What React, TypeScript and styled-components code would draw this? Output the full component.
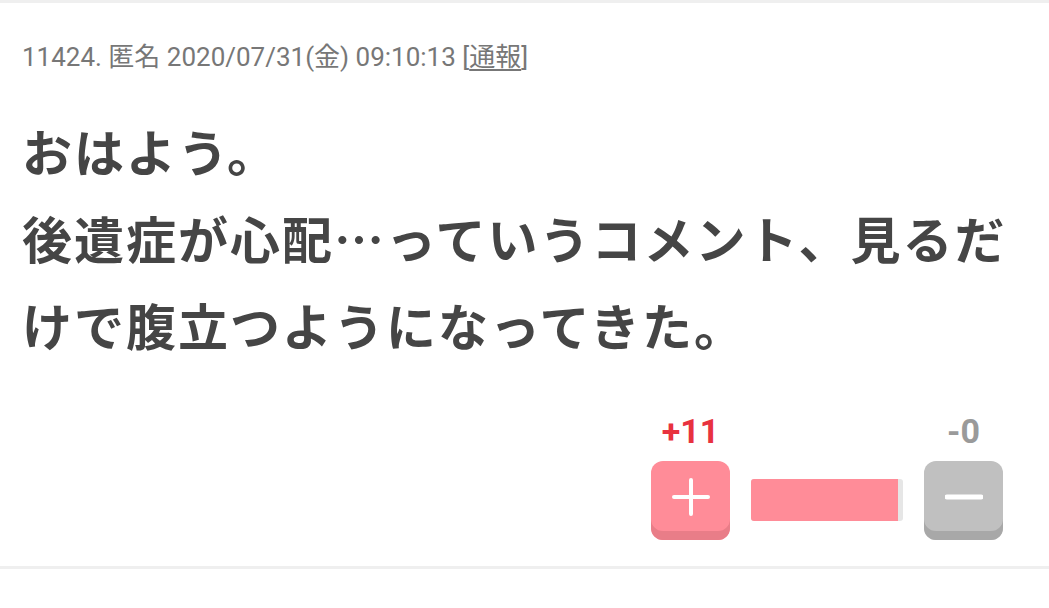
import React from "react";
import styled, { createGlobalStyle } from "styled-components";

const GlobalStyle = createGlobalStyle`
    html, body {
        margin: 0;
        padding: 0;
        background: #ffffff;
    }
`;

const Comment = styled.article`
    border-top: 3px solid #efefef;
    border-bottom: 3px solid #efefef;
    padding: 0 46px 26px 22px;
`;

const Meta = styled.div`
    margin-top: 39px;
    font-family: Roboto, "Noto Sans CJK JP", sans-serif;
    font-size: 26px;
    line-height: 30px;
    height: 30px;
    color: #777777;
    white-space: nowrap;
`;

const ReportLink = styled.a`
    color: #777777;
    text-decoration: underline;
    text-underline-offset: 3px;
`;

const Body = styled.p`
    margin: 35px -24px 0 0;
    font-family: "Noto Sans CJK JP", sans-serif;
    font-weight: 700;
    font-size: 50px;
    line-height: 87px;
    letter-spacing: 2px;
    color: #454545;
`;

const VoteRow = styled.div`
    display: flex;
    justify-content: flex-end;
    align-items: flex-end;
    margin-top: 43px;
`;

const VoteColumn = styled.div`
    display: flex;
    flex-direction: column;
    align-items: center;
    width: 79px;
`;

const VoteCount = styled.div<{ $tone: "plus" | "minus" }>`
    font-family: Roboto, sans-serif;
    font-weight: 700;
    font-size: 34px;
    line-height: 40px;
    height: 40px;
    margin-bottom: 10px;
    color: ${(p) => (p.$tone === "plus" ? "#e8323f" : "#9a9a9a")};
`;

const VoteButton = styled.button<{ $tone: "plus" | "minus" }>`
    display: flex;
    align-items: center;
    justify-content: center;
    width: 79px;
    height: 79px;
    padding: 0 0 8px;
    border: none;
    border-radius: 12px;
    background: ${(p) => (p.$tone === "plus" ? "#ff8c98" : "#c0c0c0")};
    box-shadow: inset 0 -9px 0
        ${(p) => (p.$tone === "plus" ? "#e97d88" : "#a8a8a8")};
    cursor: pointer;
`;

const Bar = styled.div`
    display: flex;
    width: 152px;
    height: 42px;
    margin: 0 21px 19px;
    border-radius: 3px;
    overflow: hidden;
    background: #e6e6e6;
`;

const BarFill = styled.div`
    height: 100%;
    background: #ff8c98;
`;

const PlusIcon = () => (
    <svg width="38" height="38" viewBox="0 0 38 38">
        <path
            d="M19 2v34M2 19h34"
            stroke="#ffffff"
            strokeWidth="4"
            strokeLinecap="round"
        />
    </svg>
);

const MinusIcon = () => (
    <svg width="38" height="38" viewBox="0 0 38 38">
        <path
            d="M2 19h34"
            stroke="#ffffff"
            strokeWidth="5"
            strokeLinecap="round"
        />
    </svg>
);

const App = () => {
    const plus = 11;
    const minus = 0;
    const ratio = plus + minus === 0 ? 0.5 : plus / (plus + minus);

    return (
        <>
            <GlobalStyle />
            <Comment>
                <Meta>
                    11424. 匿名 2020/07/31(金) 09:10:13 [
                    <ReportLink href="#">通報</ReportLink>]
                </Meta>
                <Body>
                    おはよう。
                    <br />
                    後遺症が心配…っていうコメント、見るだけで腹立つようになってきた。
                </Body>
                <VoteRow>
                    <VoteColumn>
                        <VoteCount $tone="plus">+{plus}</VoteCount>
                        <VoteButton $tone="plus" type="button">
                            <PlusIcon />
                        </VoteButton>
                    </VoteColumn>
                    <Bar>
                        <BarFill style={{ width: `${ratio * 97}%` }} />
                    </Bar>
                    <VoteColumn>
                        <VoteCount $tone="minus">-{minus}</VoteCount>
                        <VoteButton $tone="minus" type="button">
                            <MinusIcon />
                        </VoteButton>
                    </VoteColumn>
                </VoteRow>
            </Comment>
        </>
    );
};

export default App;
